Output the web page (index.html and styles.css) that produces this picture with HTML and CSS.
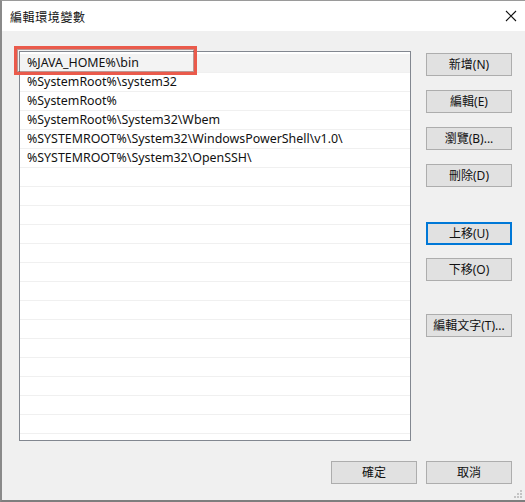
FILE: index.html
```html
<!DOCTYPE html>
<html>
<head>
<meta charset="utf-8">
<link rel="stylesheet" href="styles.css">
</head>
<body>
<div class="window">
  <div class="titlebar">
    <span class="title">編輯環境變數</span>
    <svg class="close" width="12" height="12" viewBox="0 0 12 12"><path d="M1 1 L11 11 M11 1 L1 11" stroke="#111" stroke-width="1.1" fill="none"/></svg>
  </div>
  <div class="content">
    <div class="main">
      <div class="list">
        <div class="row selected">%JAVA_HOME%\bin</div>
        <div class="row">%SystemRoot%\system32</div>
        <div class="row">%SystemRoot%</div>
        <div class="row">%SystemRoot%\System32\Wbem</div>
        <div class="row">%SYSTEMROOT%\System32\WindowsPowerShell\v1.0\</div>
        <div class="row">%SYSTEMROOT%\System32\OpenSSH\</div>
        <div class="row"></div>
        <div class="row"></div>
        <div class="row"></div>
        <div class="row"></div>
        <div class="row"></div>
        <div class="row"></div>
        <div class="row"></div>
        <div class="row"></div>
        <div class="row"></div>
        <div class="row"></div>
        <div class="row"></div>
        <div class="row"></div>
        <div class="row"></div>
        <div class="row"></div>
        <div class="highlight"></div>
      </div>
      <div class="side">
        <button class="btn b-new">新增(N)</button>
        <button class="btn b-edit">編輯(E)</button>
        <button class="btn b-browse">瀏覽(B)...</button>
        <button class="btn b-del">刪除(D)</button>
        <button class="btn default b-up">上移(U)</button>
        <button class="btn b-down">下移(O)</button>
        <button class="btn b-text">編輯文字(T)...</button>
      </div>
    </div>
    <div class="footer">
      <button class="btn">確定</button>
      <button class="btn">取消</button>
    </div>
  </div>
  <svg class="grip" width="8" height="8" viewBox="0 0 8 8">
    <rect x="6" y="0" width="2" height="2" fill="#c4c4c4"/>
    <rect x="3" y="3" width="2" height="2" fill="#c4c4c4"/>
    <rect x="6" y="3" width="2" height="2" fill="#c4c4c4"/>
    <rect x="0" y="6" width="2" height="2" fill="#c4c4c4"/>
    <rect x="3" y="6" width="2" height="2" fill="#c4c4c4"/>
    <rect x="6" y="6" width="2" height="2" fill="#c4c4c4"/>
  </svg>
</div>
</body>
</html>
```
FILE: styles.css
```css
* { box-sizing: border-box; }
html, body { margin: 0; padding: 0; background: #f0f0f0; }
body {
  font-family: "Noto Sans", "Noto Sans CJK TC", sans-serif;
  font-size: 12.4px;
  color: #000;
}
.window {
  position: relative;
  width: 525px;
  height: 502px;
  background: #f0f0f0;
  border-left: 2px solid #8a8a8a;
  border-top: 1px solid #9a9a9a;
  border-bottom: 2px solid #7e7e7e;
}
.titlebar {
  height: 30px;
  background: #fff;
  display: flex;
  align-items: center;
  justify-content: space-between;
  padding: 0 8px 0 8px;
}
.title {
  font-family: "Noto Sans CJK TC", sans-serif;
  font-size: 12px;
  letter-spacing: 0.6px;
  color: #111;
}
.close { display: block; margin-top: -1px; }
.content {
  padding: 20px 13px 0 17px;
}
.main {
  display: flex;
  align-items: flex-start;
}
.list {
  position: relative;
  width: 392px;
  height: 390px;
  border: 1px solid #828790;
  background: #fff;
  padding-top: 2px;
}
.row {
  height: 19px;
  border-bottom: 1px solid #f0f0f0;
  padding-left: 7px;
  line-height: 18px;
  white-space: nowrap;
  color: #111;
}
.row.selected { background: #f3f3f3; }
.highlight {
  position: absolute;
  left: -6px;
  top: -6px;
  width: 183px;
  height: 29px;
  border: 3px solid #ea5a4b;
  box-shadow: inset 0 0 0 1px rgba(120, 40, 30, 0.45);
}
.side {
  margin-left: 15px;
  padding-top: 2px;
  display: flex;
  flex-direction: column;
}
.btn {
  width: 86px;
  height: 23px;
  background: #e1e1e1;
  border: 1px solid #adadad;
  font-family: "Noto Sans", "Noto Sans CJK TC", sans-serif;
  font-size: 12px;
  color: #111;
  padding: 0;
  margin: 0;
  line-height: 20px;
}
.btn.default { border: 2px solid #0078d7; }
.b-edit, .b-browse, .b-del { margin-top: 14px; }
.b-up { margin-top: 35px; }
.b-down { margin-top: 13px; }
.b-text { margin-top: 33px; }
.footer {
  display: flex;
  justify-content: flex-end;
  gap: 9px;
  margin-top: 20px;
}
.grip {
  position: absolute;
  right: 3px;
  bottom: 2px;
}
```
